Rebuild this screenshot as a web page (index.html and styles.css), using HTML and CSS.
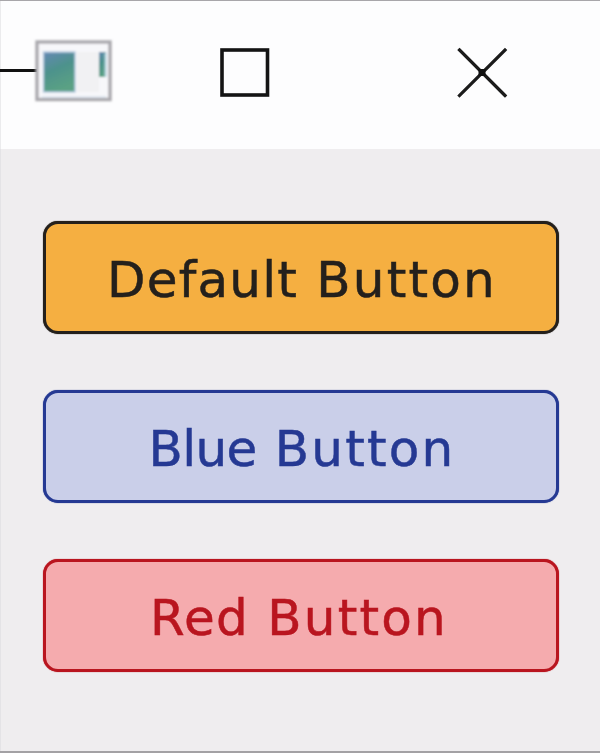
FILE: index.html
```
<!DOCTYPE html>
<html lang="en">
<head>
<meta charset="utf-8">
<title>Buttons</title>
<link rel="stylesheet" href="styles.css">
</head>
<body>
<div class="window">
  <header class="titlebar">
    <svg width="600" height="147" viewBox="0 1 600 147" aria-hidden="true">
      <defs>
        <linearGradient id="pane" x1="0" y1="0" x2="0.35" y2="1">
          <stop offset="0" stop-color="#6488b4"/>
          <stop offset="0.5" stop-color="#4d928c"/>
          <stop offset="1" stop-color="#5aa184"/>
        </linearGradient>
        <filter id="soft"><feGaussianBlur stdDeviation="0.8"/></filter>
      </defs>
      <path d="M0 70.5H37" stroke="#111" stroke-width="3.2"/>
      <g filter="url(#soft)">
        <rect x="37" y="42" width="73" height="57.5" fill="#f7f7fa" stroke="#aaa9ae" stroke-width="3.4"/>
        <path d="M42 97H106" stroke="#c9d9e8" stroke-width="1"/>
        <rect x="77" y="52" width="22" height="40" fill="#f1f1f3"/>
        <rect x="43.500" y="52" width="31.500" height="40" fill="url(#pane)" stroke="#b3c9df" stroke-width="1.5"/>
        <rect x="99" y="52" width="7" height="25" fill="url(#pane)"/>
        <path d="M105.500 53V77" stroke="#b0d3df" stroke-width="2"/>
      </g>
      <rect x="222" y="50" width="45.500" height="45" fill="none" stroke="#141414" stroke-width="3.6"/>
      <path d="M459.500 50L505 95.500M505 50L459.500 95.500" fill="none" stroke="#1b1b1b" stroke-width="3.2" stroke-linecap="square"/>
      <path d="M478.500 69H485.500V76H478.500Z" fill="#111"/>
    </svg>
  </header>
  <main class="content">
    <button class="button default"><span class="kind">Default</span> Button</button>
    <button class="button blue"><span class="kind">Blue</span> Button</button>
    <button class="button red"><span class="kind">Red</span> Button</button>
  </main>
</div>
</body>
</html>
```
FILE: styles.css
```
body {
  margin: 0;
}
.window {
  box-sizing: border-box;
  width: 600px;
  height: 753px;
  overflow: hidden;
  background: #efedef;
  border-top: 1px solid #a8a6aa;
  border-bottom: 2px solid #a3a1a4;
  box-shadow: inset 1px 0 #e4e3e6;
}
.titlebar {
  height: 148px;
  background: #fdfdfe;
  box-shadow: inset 1px 0 #ebebed;
}
.titlebar svg {
  display: block;
}
.content {
  display: flex;
  flex-direction: column;
  gap: 56px;
  padding: 72px 41px 0 43px;
}
.button {
  box-sizing: border-box;
  width: 516px;
  height: 113px;
  margin: 0;
  padding: 4px 0 0 2px;
  border: 3px solid;
  border-radius: 15px;
  box-shadow: 0 0 1px currentColor;
  font: 50px/60px "DejaVu Sans", Verdana, sans-serif;
  letter-spacing: 2.2px;
  white-space: nowrap;
  -webkit-text-stroke: 0.5px currentColor;
}
.default {
  color: #24201c;
  background: #f5af41;
}
.default .kind {
  letter-spacing: 1.2px;
}
.blue {
  color: #253993;
  background: #cacfe9;
}
.blue .kind {
  letter-spacing: -0.6px;
}
.red {
  padding: 4px 4px 0 0;
  color: #b9151f;
  background: #f5abae;
}
.red .kind {
  letter-spacing: 1.4px;
}
```
